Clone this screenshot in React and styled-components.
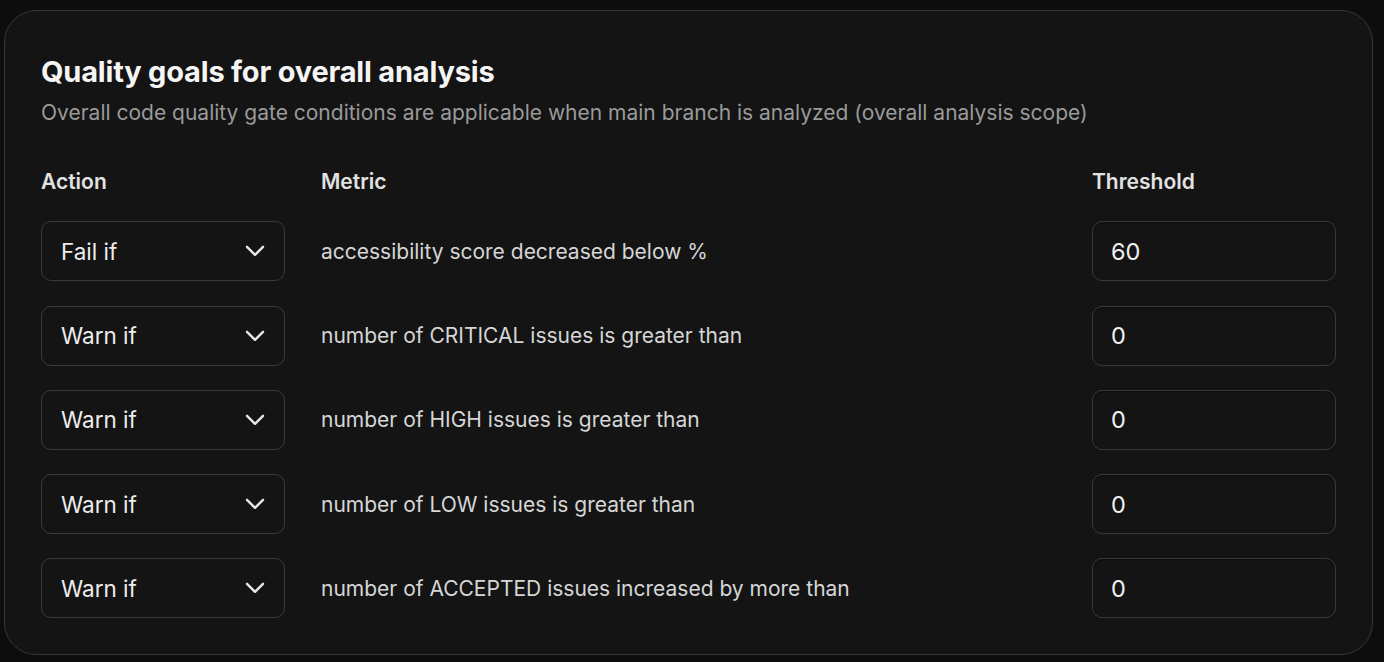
import React from 'react';
import styled, { createGlobalStyle } from 'styled-components';

const Global = createGlobalStyle`
  html, body {
    margin: 0;
    background: #0d0d0d;
  }
  body {
    font-family: Inter, "Noto Sans", sans-serif;
    -webkit-font-smoothing: antialiased;
  }
`;

const Page = styled.div`
  padding: 10px 11px 8px 4px;
  width: 1384px;
  height: 662px;
  box-sizing: border-box;
`;

const Card = styled.section`
  box-sizing: border-box;
  height: 645px;
  background: #141414;
  border: 1px solid #363636;
  border-radius: 32px;
  padding: 43px 36px 0 36px;
`;

const Title = styled.h2`
  margin: 0;
  font-size: 29px;
  font-weight: 700;
  color: #f5f5f5;
  letter-spacing: -0.2px;
  line-height: 36px;
`;

const Subtitle = styled.p`
  margin: 9px 0 0;
  font-size: 21px;
  color: #9a9a9a;
  line-height: 28px;
`;

const Grid = styled.div`
  margin-top: 42px;
  display: grid;
  grid-template-columns: 244px 1fr 244px;
  column-gap: 36px;
  row-gap: 24.3px;
  align-items: center;
`;

const Head = styled.div`
  font-size: 21px;
  line-height: 26px;
  font-weight: 600;
  color: #e2e2e2;
  margin-bottom: 2px;
`;

const Select = styled.div`
  box-sizing: border-box;
  height: 60px;
  border: 1px solid #3a3a3a;
  border-radius: 10px;
  padding: 0 19px 0 19px;
  display: flex;
  align-items: center;
  justify-content: space-between;
  font-size: 22.5px;
  color: #ededed;
`;

const Metric = styled.div`
  font-size: 21px;
  color: #d6d6d6;
`;

const Input = styled.div`
  box-sizing: border-box;
  height: 60px;
  border: 1px solid #3a3a3a;
  border-radius: 10px;
  padding: 0 18px;
  display: flex;
  align-items: center;
  font-size: 23.5px;
  color: #f0f0f0;
  box-shadow: inset 0 1px 2px rgba(0, 0, 0, 0.35);
`;

const Chevron = () => (
  <svg width="20" height="12" viewBox="0 0 20 12" fill="none" stroke="#e8e8e8" strokeWidth="2.4" strokeLinecap="round" strokeLinejoin="round">
    <path d="M2 1.8l8 8 8-8" />
  </svg>
);

const rows = [
  { action: 'Fail if', metric: 'accessibility score decreased below %', value: '60' },
  { action: 'Warn if', metric: 'number of CRITICAL issues is greater than', value: '0' },
  { action: 'Warn if', metric: 'number of HIGH issues is greater than', value: '0' },
  { action: 'Warn if', metric: 'number of LOW issues is greater than', value: '0' },
  { action: 'Warn if', metric: 'number of ACCEPTED issues increased by more than', value: '0' },
];

export default function App() {
  return (
    <Page>
      <Global />
      <Card>
        <Title>Quality goals for overall analysis</Title>
        <Subtitle>Overall code quality gate conditions are applicable when main branch is analyzed (overall analysis scope)</Subtitle>
        <Grid>
          <Head>Action</Head>
          <Head>Metric</Head>
          <Head>Threshold</Head>
          {rows.map((r, i) => (
            <React.Fragment key={i}>
              <Select>
                {r.action}
                <Chevron />
              </Select>
              <Metric>{r.metric}</Metric>
              <Input>{r.value}</Input>
            </React.Fragment>
          ))}
        </Grid>
      </Card>
    </Page>
  );
}
